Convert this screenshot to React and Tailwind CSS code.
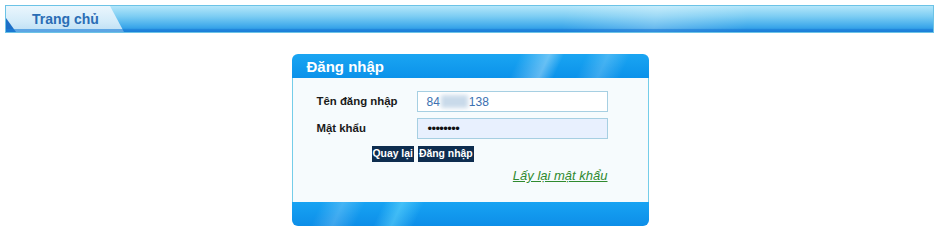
import React from "react";

export default function App() {
  return (
    <div className="w-[940px] h-[244px] bg-white font-['Liberation_Sans',Arial,sans-serif] pt-[5px]">
      {/* Top bar */}
      <div className="mx-[5px] w-[929px] h-[28px] relative border border-[#6cc3e6] bg-[linear-gradient(to_bottom,#b4e6fa_0%,#7ccdf3_40%,#3aa6ea_82%,#1a7ed8_100%)] overflow-hidden">
        <div className="absolute inset-0 bg-[linear-gradient(100deg,transparent_0%,transparent_60%,rgba(255,255,255,0.25)_70%,transparent_80%)]"></div>
        <div className="absolute left-0 top-0 h-full w-[118px] [clip-path:polygon(0_0,104px_0,118px_100%,0_100%)] bg-[linear-gradient(to_bottom,#eaf6fd_0%,#d3ebf9_60%,#bcdef4_100%)] flex items-center">
          <span className="ml-[26px] text-[14px] font-bold text-[#2a6db5] leading-none">Trang chủ</span>
        </div>
        <div className="absolute left-0 bottom-0 w-[10px] h-[14px] [clip-path:polygon(0_0,100%_100%,0_100%)] bg-[#1c6fc7]"></div>
        <div className="absolute left-0 right-0 bottom-0 h-[3px] bg-[#1a7fd8] opacity-60"></div>
      </div>

      {/* Login box */}
      <div className="mt-[21px] mx-auto w-[357px] rounded-[6px] overflow-hidden">
        <div className="h-[24px] relative bg-[linear-gradient(to_bottom,#1aa5f2,#0b92ea)] flex items-center overflow-hidden">
          <div className="absolute inset-0 bg-[linear-gradient(115deg,transparent_0%,transparent_62%,rgba(255,255,255,0.35)_70%,transparent_74%,transparent_80%,rgba(255,255,255,0.2)_86%,transparent_92%)]"></div>
          <span className="relative ml-[15px] text-[15px] font-bold text-white leading-none">Đăng nhập</span>
        </div>
        <div className="h-[124px] bg-[#f6fbfd] border-x border-[#74cde9] flex flex-col">
          <div className="flex mt-[13px]">
            <div className="w-[124px] pl-[24px] flex flex-col">
              <div className="h-[21px] flex items-center text-[11.4px] font-bold text-[#1a1a1a]">Tên đăng nhập</div>
              <div className="h-[21px] mt-[6px] flex items-center text-[11.4px] font-bold text-[#1a1a1a]">Mật khẩu</div>
            </div>
            <div className="flex flex-col">
              <div className="w-[191px] h-[21px] border border-[#a6cfe2] bg-white flex items-center pl-[9px] text-[12px] text-[#3a6fb0]">
                <span>84</span>
                <span className="inline-block w-[27px] h-[13px] bg-[#c9daea] blur-[2px] mx-[1px]"></span>
                <span>138</span>
              </div>
              <div className="w-[191px] h-[21px] mt-[6px] border border-[#a6cfe2] bg-[#e8f0fe] flex items-center pl-[10px] text-[13px] text-[#111] tracking-[-0.6px]">
                ••••••••
              </div>
            </div>
          </div>
          <div className="flex mt-[7px] pl-[79px] gap-[4px]">
            <button className="h-[16px] px-[1px] bg-[#0e2d4f] text-white text-[10.4px] font-bold leading-none">Quay lại</button>
            <button className="h-[16px] px-[1px] bg-[#0e2d4f] text-white text-[10.4px] font-bold leading-none">Đăng nhập</button>
          </div>
          <div className="flex justify-end pr-[40px] mt-[4px]">
            <a className="text-[13px] italic underline text-[#2f8a2f]">Lấy lại mật khẩu</a>
          </div>
        </div>
        <div className="h-[24px] relative bg-[linear-gradient(to_bottom,#17a3f3,#0d8ee8)] overflow-hidden">
          <div className="absolute inset-0 bg-[linear-gradient(115deg,transparent_0%,transparent_8%,rgba(255,255,255,0.2)_14%,transparent_20%,transparent_25%,rgba(120,230,255,0.45)_30%,transparent_36%)]"></div>
        </div>
      </div>
    </div>
  );
}
